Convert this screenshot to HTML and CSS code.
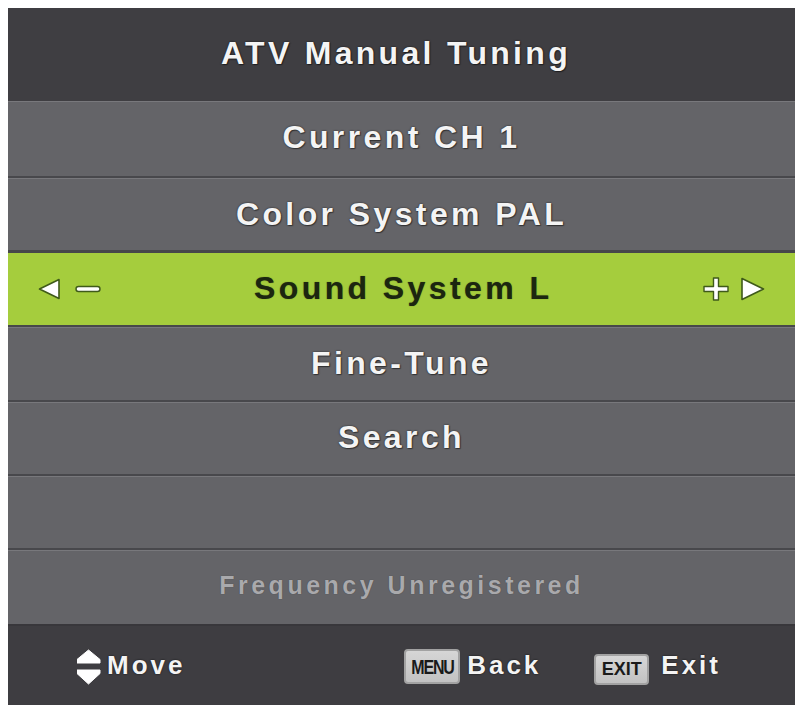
FILE: index.html
```html
<!DOCTYPE html>
<html lang="en">
<head>
<meta charset="utf-8">
<title>ATV Manual Tuning</title>
<link rel="stylesheet" href="styles.css">
</head>
<body>
<div class="panel">
  <div class="header">ATV Manual Tuning</div>
  <div class="row row--first">Current CH 1</div>
  <div class="row">Color System PAL</div>
  <div class="row row--active">
    <div class="side side--left">
      <svg class="ctl" width="64" height="24" viewBox="0 0 64 24">
        <polygon points="1.5,12 21,2.5 21,21.5" fill="#fff" stroke="#3f5a1a" stroke-width="1.6" stroke-linejoin="round"/>
        <rect x="38" y="9.5" width="24" height="5" rx="2.5" fill="#fff" stroke="#3f5a1a" stroke-width="1.4"/>
      </svg>
    </div>
    <div class="label">Sound System L</div>
    <div class="side side--right">
      <svg class="ctl" width="62" height="24" viewBox="0 0 62 24">
        <path d="M10.5 1h5v8.5H25v5h-9.5V23h-5v-8.5H1v-5h9.5z" fill="#fff" stroke="#3f5a1a" stroke-width="1.4" stroke-linejoin="round"/>
        <polygon points="39,1.5 60.5,12 39,22.5" fill="#fff" stroke="#3f5a1a" stroke-width="1.6" stroke-linejoin="round"/>
      </svg>
    </div>
  </div>
  <div class="row">Fine-Tune</div>
  <div class="row">Search</div>
  <div class="row"></div>
  <div class="row row--info">Frequency Unregistered</div>
  <div class="footer">
    <div class="hint hint--move">
      <svg class="move-icon" width="24" height="36" viewBox="0 0 24 36">
        <polygon points="11.5,1 23,10.5 23,14 0,14 0,10.5" fill="#fff" stroke="#fff" stroke-width="1" stroke-linejoin="round"/>
        <polygon points="0,21 23,21 23,24.5 11.5,35 0,24.5" fill="#fff" stroke="#fff" stroke-width="1" stroke-linejoin="round"/>
      </svg>
      <span class="hint-text">Move</span>
    </div>
    <div class="hints">
      <div class="hint hint--back">
        <span class="badge badge--menu"><span class="badge-text badge-text--menu">MENU</span></span>
        <span class="hint-text">Back</span>
      </div>
      <div class="hint hint--exit">
        <span class="badge badge--exit"><span class="badge-text">EXIT</span></span>
        <span class="hint-text">Exit</span>
      </div>
    </div>
  </div>
</div>
</body>
</html>
```
FILE: styles.css
```css
html, body {
  margin: 0;
  padding: 0;
  background: #ffffff;
}

body {
  padding: 8px;
  font-family: "Liberation Sans", Arial, sans-serif;
}

.panel {
  width: 787px;
  height: 697px;
  display: flex;
  flex-direction: column;
  background: #646468;
  font-weight: bold;
  color: #f4f4f4;
}

.header {
  height: 93px;
  flex: none;
  display: flex;
  align-items: center;
  justify-content: center;
  padding-right: 11px;
  padding-bottom: 2px;
  box-sizing: border-box;
  background: #3f3e42;
  font-size: 32px;
  letter-spacing: 3.3px;
  text-shadow: 0 0 2px rgba(0, 0, 0, 0.7), 1px 1px 1px rgba(0, 0, 0, 0.4);
}

.row {
  flex: 1;
  display: flex;
  align-items: center;
  justify-content: center;
  box-sizing: border-box;
  border-top: 2px solid #48484c;
  box-shadow: inset 0 1px 0 #78787c;
  background: #646468;
  font-size: 32px;
  letter-spacing: 3.4px;
  text-shadow: 0 0 2px rgba(0, 0, 0, 0.7), 1px 1px 1px rgba(0, 0, 0, 0.4);
}

.row--first {
  border-top: 0;
  padding-bottom: 3px;
}

.row--active {
  display: grid;
  grid-template-columns: 1fr auto 1fr;
  align-items: center;
  border-top: 3px solid #47484a;
  border-bottom: 2px solid #47484a;
  box-shadow: none;
  background: #a5cd3d;
  color: #1c2610;
  text-shadow: 0 0 1px rgba(30, 50, 10, 0.6);
  padding: 0 30px;
}

.row--active + .row {
  border-top: 0;
}

.side {
  display: flex;
  align-items: center;
}

.side--left {
  justify-content: flex-start;
}

.side--right {
  justify-content: flex-end;
}

.ctl {
  display: block;
}

.label {
  padding-left: 3.4px;
  padding-bottom: 2px;
}

.row--info {
  font-size: 25px;
  letter-spacing: 3.5px;
  color: #a9a9ac;
  text-shadow: 0 0 1px rgba(0, 0, 0, 0.4);
  padding-bottom: 2px;
}

.footer {
  height: 81px;
  flex: none;
  box-sizing: border-box;
  border-top: 2px solid #38373b;
  background: #3e3d41;
  display: flex;
  align-items: center;
  padding: 0 74px 0 69px;
  font-size: 26px;
  letter-spacing: 3px;
  text-shadow: 0 0 2px rgba(0, 0, 0, 0.8);
}

.hint {
  display: flex;
  align-items: center;
}

.hint--move {
  gap: 6px;
}

.move-icon {
  display: block;
  margin-top: 3px;
}

.hints {
  margin-left: auto;
  display: flex;
  align-items: center;
  gap: 53px;
}

.hint--back {
  gap: 7px;
}

.hint--exit {
  gap: 12px;
}

.badge {
  display: flex;
  align-items: center;
  justify-content: center;
  box-sizing: border-box;
  border-radius: 4px;
  background: linear-gradient(#d6d6d6, #c2c2c2);
  border: 2px solid #a2a2a2;
  color: #1a1a1a;
  text-shadow: none;
  letter-spacing: 0;
}

.badge--menu {
  width: 56px;
  height: 35px;
  margin-top: 3px;
}

.badge--exit {
  width: 55px;
  height: 31px;
  margin-top: 8px;
}

.badge-text {
  display: inline-block;
  font-size: 18px;
  font-weight: bold;
  line-height: 1;
}

.badge-text--menu {
  font-size: 20px;
  letter-spacing: -1.5px;
  transform: scaleX(0.8);
}
```
